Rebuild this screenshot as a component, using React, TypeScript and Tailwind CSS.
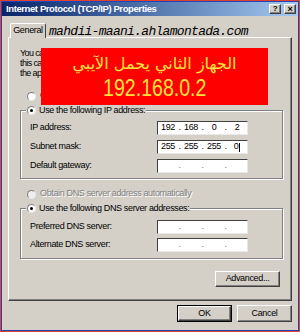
import { Fragment } from "react";

const ui = "font-['Liberation_Sans',Arial,sans-serif] text-[9px] tracking-[-0.35px] text-black";
const raised =
  "border border-t-white border-l-white border-r-[#404040] border-b-[#404040] shadow-[inset_-1px_-1px_0_#808080]";

const Radio = ({ checked = false, disabled = false }: { checked?: boolean; disabled?: boolean }) => (
  <span
    className={`inline-flex h-[9px] w-[9px] shrink-0 items-center justify-center rounded-full border border-t-[#808080] border-l-[#808080] border-r-[#e8e8e8] border-b-[#e8e8e8] ${
      disabled ? "bg-[#eeeeee]" : "bg-white"
    }`}
  >
    {checked && <span className="h-[3px] w-[3px] rounded-full bg-black" />}
  </span>
);

const IpBox = ({ parts, caret = false }: { parts?: string[]; caret?: boolean }) => (
  <div className="flex h-[14px] w-[91px] items-center border border-t-[#404040] border-l-[#404040] border-r-[#e8e8e8] border-b-[#e8e8e8] bg-white">
    {[0, 1, 2, 3].map((i) => (
      <Fragment key={i}>
        {i > 0 && <span className={`w-[3px] text-center ${parts ? "" : "text-[#666]"}`}>.</span>}
        <span className="flex w-[20px] items-center justify-center">
          {parts?.[i] ?? ""}
          {caret && i === 3 && <span className="ml-[1px] h-[9px] w-px bg-black" />}
        </span>
      </Fragment>
    ))}
  </div>
);

const Row = ({ label, children }: { label: string; children: React.ReactNode }) => (
  <div className="flex h-[14px] items-center pl-[9px]">
    <span className="w-[127px]">{label}</span>
    {children}
  </div>
);

export default function App() {
  return (
    <div className={`relative h-[332px] w-[300px] border border-[#e0402c] ${ui}`}>
      <div className="flex h-full flex-col border border-[#2244b8] bg-[#d4d0c8]">
        {/* title bar */}
        <div className="flex h-[14px] items-center bg-linear-to-r from-[#0a246a] to-[#a6caf0] pl-[4px] pr-[2px]">
          <span className="text-[9.5px] font-bold tracking-[-0.4px] text-white">
            Internet Protocol (TCP/IP) Properties
          </span>
          <div className="ml-auto flex gap-[3px]">
            <span className={`flex h-[10px] w-[12px] items-center justify-center bg-[#d4d0c8] text-[8px] font-bold leading-none ${raised}`}>
              ?
            </span>
            <span className={`flex h-[10px] w-[12px] items-center justify-center bg-[#d4d0c8] text-[9px] font-bold leading-none ${raised}`}>
              ×
            </span>
          </div>
        </div>

        {/* body */}
        <div className="flex flex-1 flex-col px-[6px] pt-[7px]">
          <div className="flex">
            <div className="relative z-10 -mb-px ml-[2px] flex h-[15px] w-[36px] items-center justify-center rounded-t-[2px] border border-b-0 border-t-white border-l-white border-r-[#404040] bg-[#d4d0c8]">
              General
            </div>
          </div>

          <div className="relative flex h-[264px] flex-col border border-t-white border-l-white border-r-[#404040] border-b-[#404040] shadow-[inset_-1px_-1px_0_#808080]">
            <div className="mt-[10px] whitespace-nowrap pl-[11px] leading-[10px] tracking-[-0.62px]">
              <div>You can get IP settings assigned automatically if your network supports</div>
              <div>this capability. Otherwise, you need to ask your network administrator for</div>
              <div>the appropriate IP settings.</div>
            </div>

            <div className="mt-[13px] flex h-[10px] items-center gap-[4px] pl-[18px]">
              <Radio />
              <span>Obtain an IP address automatically</span>
            </div>

            <fieldset className="ml-[11px] mt-[4px] w-[263px] border border-[#808080] pb-[5px] shadow-[inset_1px_1px_0_#fff,1px_1px_0_#fff]">
              <legend className="ml-[5px] flex h-[11px] items-center gap-[3px] bg-[#d4d0c8] px-[1px]">
                <Radio checked />
                <span>Use the following IP address:</span>
              </legend>
              <div className="mt-[5px] flex flex-col gap-[5px]">
                <Row label="IP address:">
                  <IpBox parts={["192", "168", "0", "2"]} />
                </Row>
                <Row label="Subnet mask:">
                  <IpBox parts={["255", "255", "255", "0"]} caret />
                </Row>
                <Row label="Default gateway:">
                  <IpBox />
                </Row>
              </div>
            </fieldset>

            <div className="mt-[10px] flex h-[10px] items-center gap-[4px] pl-[18px]">
              <Radio disabled />
              <span className="text-[#808080] [text-shadow:1px_1px_0_#fff]">
                Obtain DNS server address automatically
              </span>
            </div>

            <fieldset className="ml-[11px] mt-[4px] w-[263px] border border-[#808080] pb-[6px] shadow-[inset_1px_1px_0_#fff,1px_1px_0_#fff]">
              <legend className="ml-[5px] flex h-[11px] items-center gap-[3px] bg-[#d4d0c8] px-[1px]">
                <Radio checked />
                <span>Use the following DNS server addresses:</span>
              </legend>
              <div className="mt-[6px] flex flex-col gap-[4px]">
                <Row label="Preferred DNS server:">
                  <IpBox />
                </Row>
                <Row label="Alternate DNS server:">
                  <IpBox />
                </Row>
              </div>
            </fieldset>

            <div className="mt-[12px] flex justify-end pr-[11px]">
              <button className={`h-[16px] w-[65px] bg-[#d4d0c8] ${raised}`}>Advanced...</button>
            </div>

            {/* overlay banner */}
            <div className="absolute left-[32px] top-[10px] flex h-[57px] w-[227px] flex-col items-center bg-[#ff0000] text-[#ffe23c]">
              <span className="mt-[6px] font-['DejaVu_Sans',sans-serif] text-[16px] leading-[19px] tracking-normal" dir="rtl">
                الجهاز الثاني يحمل الآيبي
              </span>
              <span className="mt-[2px] origin-center scale-x-[0.85] font-['Liberation_Sans',sans-serif] text-[23px] leading-[26px] tracking-normal">
                192.168.0.2
              </span>
            </div>
          </div>

          <div className="mt-[4px] flex justify-end gap-[5px]">
            <button className="h-[17px] w-[55px] border border-black bg-[#d4d0c8]">
              <span className={`flex h-full w-full items-center justify-center ${raised}`}>OK</span>
            </button>
            <button className={`h-[17px] w-[55px] bg-[#d4d0c8] ${raised}`}>Cancel</button>
          </div>
        </div>
      </div>

      {/* watermark */}
      <span className="absolute left-[48px] top-[21px] z-20 font-['Liberation_Mono',monospace] text-[13px] italic tracking-[-0.7px] text-black">
        mahdii-maani.ahlamontada.com
      </span>
    </div>
  );
}
